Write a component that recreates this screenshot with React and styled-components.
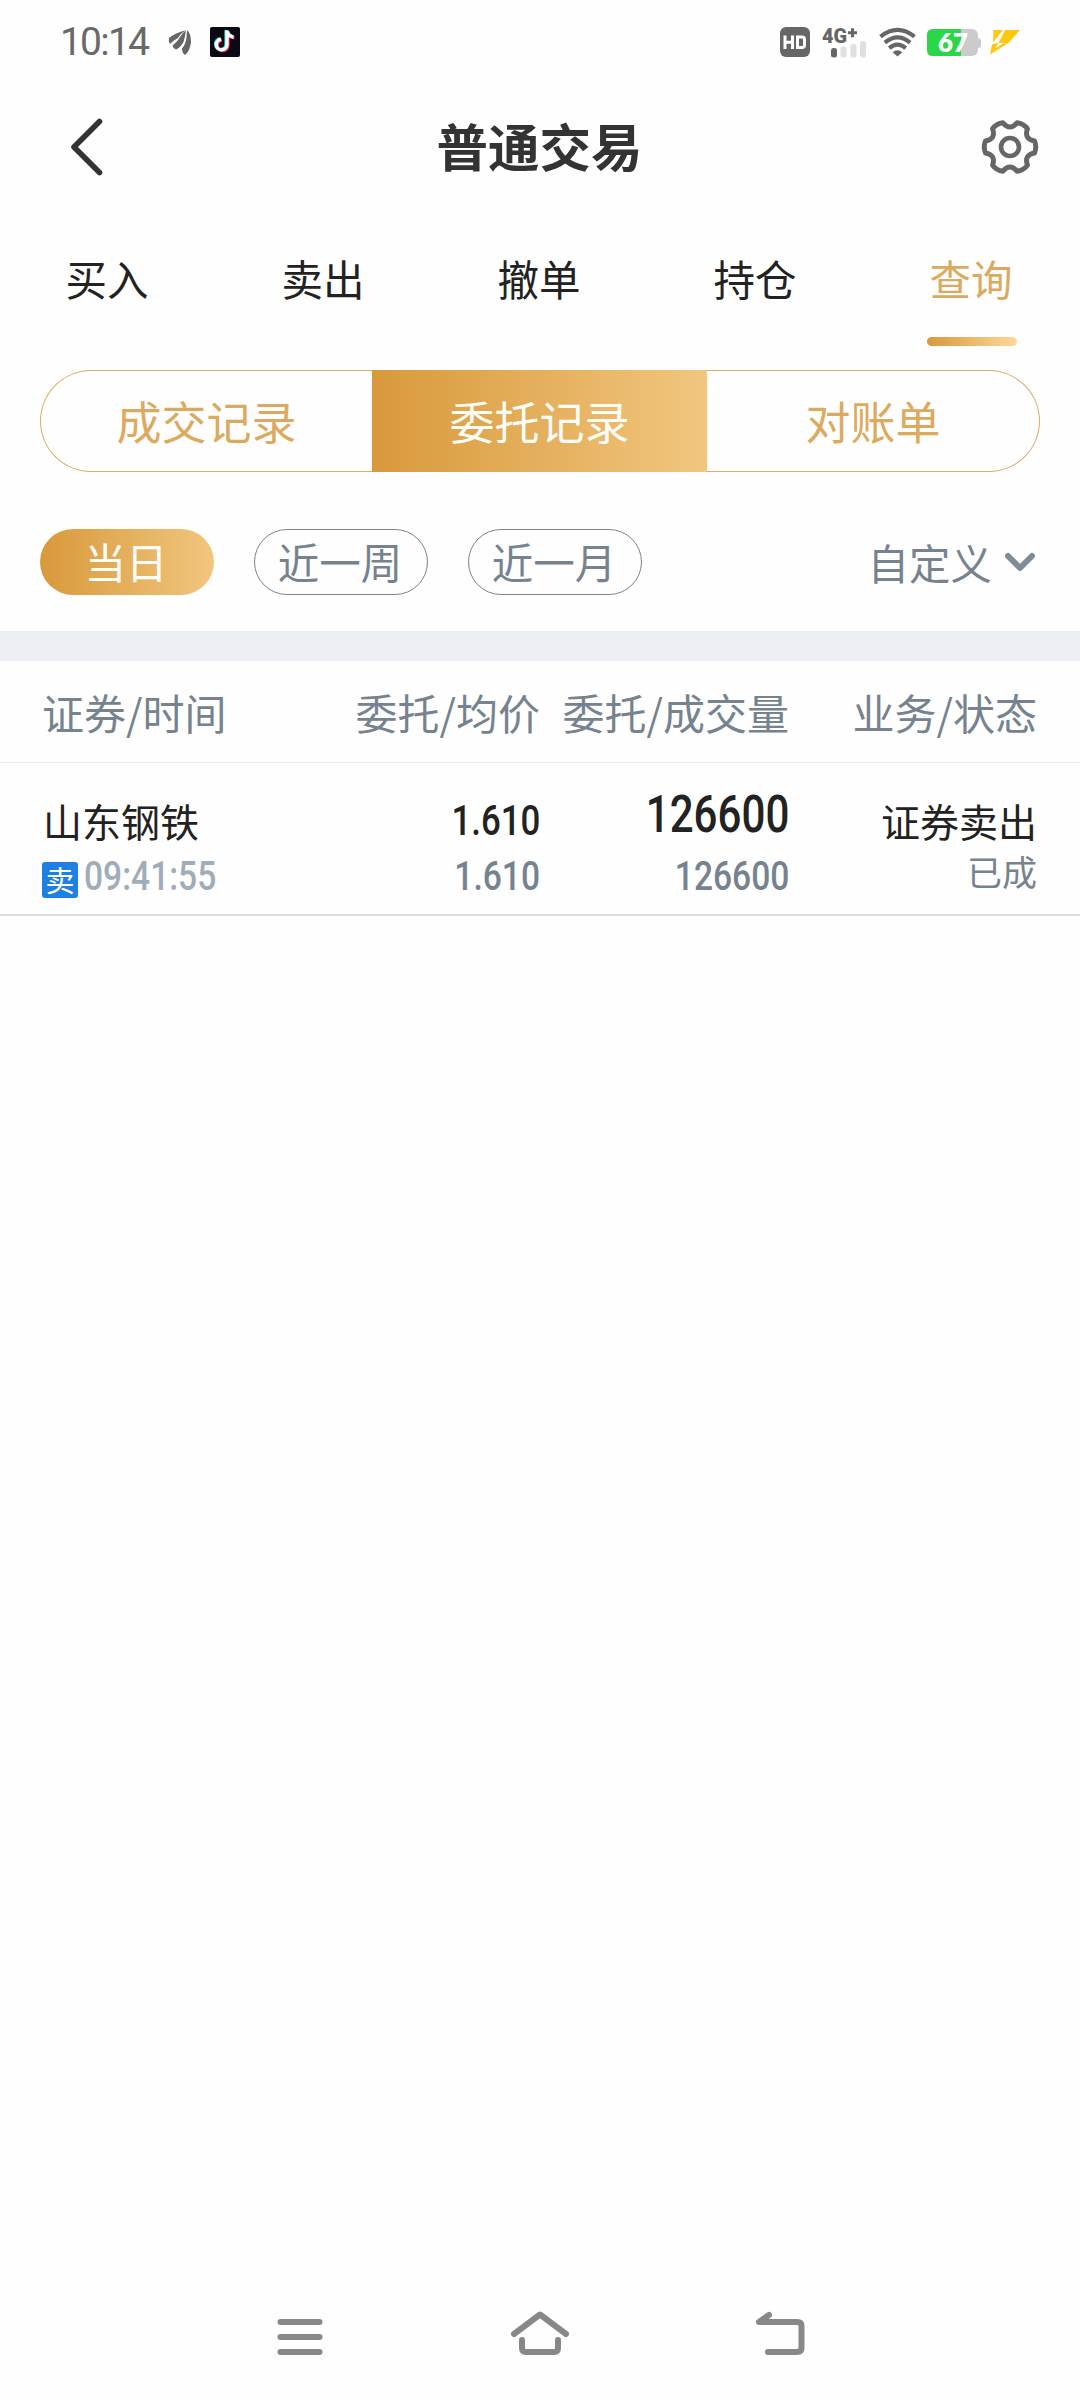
import React, { useState } from 'react';
import styled, { createGlobalStyle, css } from 'styled-components';

const GlobalStyle = createGlobalStyle`
  body {
    margin: 0;
    background: #fefefe;
    font-family: 'Noto Sans CJK SC', sans-serif;
  }
`;

const gold = 'linear-gradient(90deg, #d8993b, #f1c67f)';

const Screen = styled.div`
  display: flex;
  flex-direction: column;
  width: 1080px;
  height: 2400px;
  overflow: hidden;
  background: #fefefe;
`;

const StatusBar = styled.div`
  display: flex;
  justify-content: space-between;
  height: 84px;
  padding: 0 60px;
  box-sizing: border-box;
`;

const StatusGroup = styled.div`
  display: flex;
  align-items: center;
  gap: ${({ $gap }) => $gap || 0}px;

  svg {
    overflow: visible;
  }
`;

const Clock = styled.span`
  width: 91px;
  font-family: Roboto, sans-serif;
  font-size: 39px;
  line-height: 84px;
  letter-spacing: -1.8px;
  color: #696969;
`;

const Header = styled.header`
  display: grid;
  grid-template-columns: 68px 1fr 68px;
  align-items: center;
  height: 126px;
  padding: 0 36px 0 52px;
`;

const Title = styled.h1`
  margin: 0;
  padding: 0 17px 4px 0;
  text-align: center;
  font-size: 51.5px;
  line-height: 74px;
  font-weight: 700;
  color: #333;
`;

const Tabs = styled.nav`
  display: grid;
  grid-template-columns: repeat(5, 216px);
  height: 136px;
`;

const Tab = styled.div`
  display: flex;
  flex-direction: column;
  align-items: center;
  justify-content: space-between;
  font-size: 41.5px;
  line-height: 136px;
  color: ${({ $active }) => ($active ? '#dcaa5e' : '#222')};

  span {
    height: 127px;
    padding-right: 2px;
  }
`;

const TabBar = styled.i`
  width: 90px;
  height: 9px;
  border-radius: 5px;
  background: linear-gradient(90deg, #d8993b, #fdd99b);
`;

const Segments = styled.div`
  display: grid;
  grid-template-columns: 332px 335px 333px;
  height: 102px;
  margin: 24px 40px 0;
`;

const Segment = styled.div`
  box-sizing: border-box;
  border: 1px solid #d5ad68;
  text-align: center;
  font-size: 45px;
  line-height: 100px;
  color: #dcaa5e;

  &:first-child {
    border-right: none;
    border-radius: 51px 0 0 51px;
  }

  &:last-child {
    border-left: none;
    border-radius: 0 51px 51px 0;
  }

  ${({ $active }) => $active && css`
    border: none;
    line-height: 102px;
    color: #fffdf8;
    background: ${gold};
  `}
`;

const Filters = styled.div`
  display: flex;
  align-items: center;
  gap: 40px;
  height: 66px;
  padding: 0 43px 0 40px;
  margin: 57px 0 36px;
`;

const Pill = styled.div`
  box-sizing: border-box;
  width: 174px;
  height: 66px;
  padding-right: 2px;
  border: 1px solid #77848f;
  border-radius: 33px;
  text-align: center;
  font-size: 41.5px;
  line-height: 62px;
  color: #76838f;

  ${({ $active }) => $active && css`
    border: none;
    line-height: 64px;
    color: #fffdf8;
    background: ${gold};
  `}
`;

const Custom = styled.div`
  display: flex;
  align-items: center;
  gap: 13px;
  margin-left: auto;
  font-size: 41.5px;
  line-height: 62px;
  height: 64px;
  color: #76838f;
`;

const Band = styled.div`
  height: 30px;
  background: #ecf0f4;
`;

const TableRow = styled.div`
  display: grid;
  grid-template-columns: 245px 252px 249px 248px;
  padding: 0 43px;
`;

const TableHead = styled(TableRow)`
  height: 101px;
  border-bottom: 1px solid #e9ebec;
`;

const HeadCell = styled.div`
  text-align: right;
  white-space: nowrap;
  font-size: 42px;
  line-height: 101px;
  color: #76838f;

  &:first-child {
    text-align: left;
    margin-left: -1px;
  }
`;

const OrderRow = styled(TableRow)`
  height: 118px;
  padding-top: 33px;
  border-bottom: 2px solid #dedede;
`;

const Cell = styled.div`
  text-align: right;
  white-space: nowrap;

  &:first-child {
    text-align: left;
  }
`;

const Main = styled.div`
  height: 54px;
  font-size: 39px;
  line-height: ${({ $line }) => $line || 49}px;
  color: #222;
`;

const Sub = styled.div`
  display: flex;
  align-items: center;
  justify-content: flex-end;
  height: 54px;
  font-size: 35px;
  line-height: 56px;
  color: #76838f;

  ${Cell}:first-child & {
    justify-content: flex-start;
  }
`;

const Status = styled.span`
  height: 54px;
  line-height: 42px;
`;

// narrow digits, squeezed horizontally
const Digits = styled.span`
  display: inline-block;
  font-family: Roboto, sans-serif;
  font-weight: 500;
  font-size: ${({ $size }) => $size}px;
  line-height: inherit;
  transform: scaleX(${({ $scale }) => $scale || 0.84});
  transform-origin: ${({ $left }) => ($left ? 'left' : 'right')};
  ${({ $left }) => $left && 'color: #a0adb9;'}
`;

const SideTag = styled.span`
  width: 36px;
  height: 36px;
  margin: 5px 6px 0 -1px;
  border-radius: 3px;
  text-align: center;
  font-size: 29px;
  line-height: 34px;
  color: #fff;
  background: #2080e2;
`;

const NavBar = styled.footer`
  display: flex;
  justify-content: center;
  gap: 180px;
  height: 94px;
  margin-top: auto;
`;

const HdIcon = () => (
  <svg width="31" height="30" viewBox="0 0 31 30">
    <rect width="30" height="30" rx="6" fill="#666" />
    <path d="M5 8.500v13.500M12.500 8.500v13.500M5 15.300h7.500M17.500 10v10.500h4.500q2.500 0 2.500-2.500v-5.500q0-2.500-2.500-2.500z" fill="none" stroke="#fff" strokeWidth="3" />
  </svg>
);

const LeafIcon = () => (
  <svg width="23" height="27" viewBox="0 0 23 27" fill="#666">
    <path d="M0 9Q6 4 17 1Q12 4 9 9Q5 11 1 15Q-1 12 0 9z" />
    <path d="M17 1.500Q16 8 14.500 13Q11 19 7 20.500Q4 19.500 3.500 16.500Q9 12 11 8Q13 4 17 1.500z" />
    <path d="M18.500 1Q22 5 22 13Q21 22 16 26Q13 24 13 19.500Q17 15 17.500 8Q17.500 4 18.500 1z" />
  </svg>
);

const note = 'M17 3.500v14a5.300 5.300 0 1 1-6-5.200M17 4q1.500 5.500 6.500 6';

const TikTokIcon = () => (
  <svg width="30" height="30" viewBox="0 0 30 30" fill="none" strokeWidth="3.4">
    <rect width="30" height="30" rx="2" fill="#0a0914" />
    <path d={note} stroke="#25e5df" transform="translate(-.9 -.4)" />
    <path d={note} stroke="#f3355b" transform="translate(.9 .8)" />
    <path d={note} stroke="#fff" />
  </svg>
);

const SignalIcon = () => (
  <svg width="46" height="31" viewBox="0 0 46 31">
    <text x="0" y="15.500" fontFamily="Roboto" fontWeight="900" fontSize="21" fill="#666" textLength="25" lengthAdjust="spacingAndGlyphs">4G</text>
    <path d="M26 5.800h9M30.500 1.300v9" stroke="#666" strokeWidth="3" />
    <rect x="9" y="21" width="6" height="9.500" rx="2.500" fill="#666" />
    <rect x="18.500" y="19.500" width="6" height="11" rx="2.500" fill="#e0e0e0" />
    <rect x="28.500" y="17" width="6" height="13.500" rx="2.500" fill="#e0e0e0" />
    <rect x="38" y="14" width="6" height="16.500" rx="2.500" fill="#e0e0e0" />
  </svg>
);

const WifiIcon = () => (
  <svg width="37" height="30" viewBox="0 0 38 30" fill="none" stroke="#666" strokeWidth="4.200">
    <path d="M1.500 9.500Q19-4.500 36.500 9.500M6 15.700Q19 5 32 15.700M10.500 21.300Q19 14 27.500 21.300" />
    <path d="M14 25.500Q19 21.500 24 25.500L19 30z" fill="#666" stroke="none" />
  </svg>
);

const BatteryIcon = () => (
  <svg width="52" height="27" viewBox="0 0 52 27">
    <rect x="48" y="9" width="6" height="10" rx="3" fill="#cbcbcb" />
    <rect width="51" height="27" rx="6" fill="#cbcbcb" />
    <path d="M6 0H34V27H6Q0 27 0 21V6Q0 0 6 0z" fill="#2bd648" />
    <text x="11" y="23" fontFamily="Lato" fontWeight="800" fontSize="25.500" fill="#fff" textLength="30" lengthAdjust="spacingAndGlyphs">67</text>
  </svg>
);

const BoltIcon = () => (
  <svg width="30" height="25" viewBox="0 0 30 25">
    <path d="M3.500 0H13L3 12.500zM15 0H30L18.500 13H8.500zM2 14.500L8.500 12.500L5.500 18.500L12 14L18.500 13L0 24.500z" fill="#fdc80d" />
  </svg>
);

const BackIcon = () => (
  <svg width="68" height="64" viewBox="0 0 68 64">
    <path d="M47.500 6.500L22 32L47.500 57.500" fill="none" stroke="#333" strokeWidth="5.600" strokeLinecap="round" strokeLinejoin="round" />
  </svg>
);

const GearIcon = () => {
  // one tooth and the valley after it, repeated every 60 degrees
  const turn = (x, y, deg) => {
    const a = (deg * Math.PI) / 180;
    return `${(x * Math.cos(a) - y * Math.sin(a)).toFixed(2)} ${(x * Math.sin(a) + y * Math.cos(a)).toFixed(2)}`;
  };
  const d = [0, 60, 120, 180, 240, 300]
    .map((deg) => `${deg ? 'L' : 'M'}${turn(24.5, -6, deg)}Q${turn(27, 0, deg)} ${turn(24.5, 6, deg)}Q${turn(13.8, 8, deg)} ${turn(24.5, -6, deg + 60)}`)
    .join('');

  return (
    <svg width="68" height="64" viewBox="-34 -32 68 64" fill="none" stroke="#666" strokeWidth="5" strokeLinejoin="round">
      <path d={`${d}Z`} />
      <circle r="9" strokeWidth="4.600" />
    </svg>
  );
};

const DownIcon = () => (
  <svg width="32" height="22" viewBox="0 0 32 22">
    <path d="M3 5L15 17L27 5" fill="none" stroke="#7f8b97" strokeWidth="6" strokeLinecap="round" strokeLinejoin="round" />
  </svg>
);

const NavIcon = ({ d }) => (
  <svg width="60" height="60" viewBox="0 0 60 60" fill="none" stroke="#888" strokeWidth="6" strokeLinecap="round" strokeLinejoin="round">
    <path d={d} />
  </svg>
);

const navIcons = [
  'M10.500 16H49.500M10.500 31H49.500M10.500 46H49.500',
  'M4 28L30 8.500L56 28M12 34V42Q12 46 16 46H44Q48 46 48 42V34',
  'M19 9L9 16H47Q51.500 16 51.500 20V42Q51.500 46 47 46H18',
];

const tabs = ['买入', '卖出', '撤单', '持仓', '查询'];
const segments = ['成交记录', '委托记录', '对账单'];
const ranges = ['当日', '近一周', '近一月'];
const columns = ['证券/时间', '委托/均价', '委托/成交量', '业务/状态'];

const orders = [
  {
    name: '山东钢铁',
    side: '卖',
    time: '09:41:55',
    price: '1.610',
    average: '1.610',
    amount: '126600',
    filled: '126600',
    business: '证券卖出',
    status: '已成',
  },
];

const App = () => {
  const [tab, setTab] = useState('查询');
  const [segment, setSegment] = useState('委托记录');
  const [range, setRange] = useState('当日');

  return (
    <>
      <GlobalStyle />
      <Screen>
        <StatusBar>
          <StatusGroup $gap={18}>
            <Clock>10:14</Clock>
            <LeafIcon />
            <TikTokIcon />
          </StatusGroup>
          <StatusGroup $gap={11}>
            <HdIcon />
            <SignalIcon />
            <WifiIcon />
            <BatteryIcon />
            <BoltIcon />
          </StatusGroup>
        </StatusBar>

        <Header>
          <BackIcon />
          <Title>普通交易</Title>
          <GearIcon />
        </Header>

        <Tabs>
          {tabs.map((item) => (
            <Tab key={item} $active={item === tab} onClick={() => setTab(item)}>
              <span>{item}</span>
              {item === tab && <TabBar />}
            </Tab>
          ))}
        </Tabs>

        <Segments>
          {segments.map((item) => (
            <Segment key={item} $active={item === segment} onClick={() => setSegment(item)}>
              {item}
            </Segment>
          ))}
        </Segments>

        <Filters>
          {ranges.map((item) => (
            <Pill key={item} $active={item === range} onClick={() => setRange(item)}>
              {item}
            </Pill>
          ))}
          <Custom>
            自定义
            <DownIcon />
          </Custom>
        </Filters>

        <Band />

        <TableHead>
          {columns.map((item) => (
            <HeadCell key={item}>{item}</HeadCell>
          ))}
        </TableHead>
        {orders.map((order) => (
          <OrderRow key={order.time}>
            <Cell>
              <Main>{order.name}</Main>
              <Sub>
                <SideTag>{order.side}</SideTag>
                <Digits $size={40} $left>{order.time}</Digits>
              </Sub>
            </Cell>
            <Cell>
              <Main $line={45}><Digits $size={42.5} $scale={0.82}>{order.price}</Digits></Main>
              <Sub><Digits $size={40}>{order.average}</Digits></Sub>
            </Cell>
            <Cell>
              <Main $line={38}><Digits $size={52} $scale={0.81}>{order.amount}</Digits></Main>
              <Sub><Digits $size={40}>{order.filled}</Digits></Sub>
            </Cell>
            <Cell>
              <Main>{order.business}</Main>
              <Sub><Status>{order.status}</Status></Sub>
            </Cell>
          </OrderRow>
        ))}

        <NavBar>
          {navIcons.map((d) => (
            <NavIcon key={d} d={d} />
          ))}
        </NavBar>
      </Screen>
    </>
  );
};

export default App;
